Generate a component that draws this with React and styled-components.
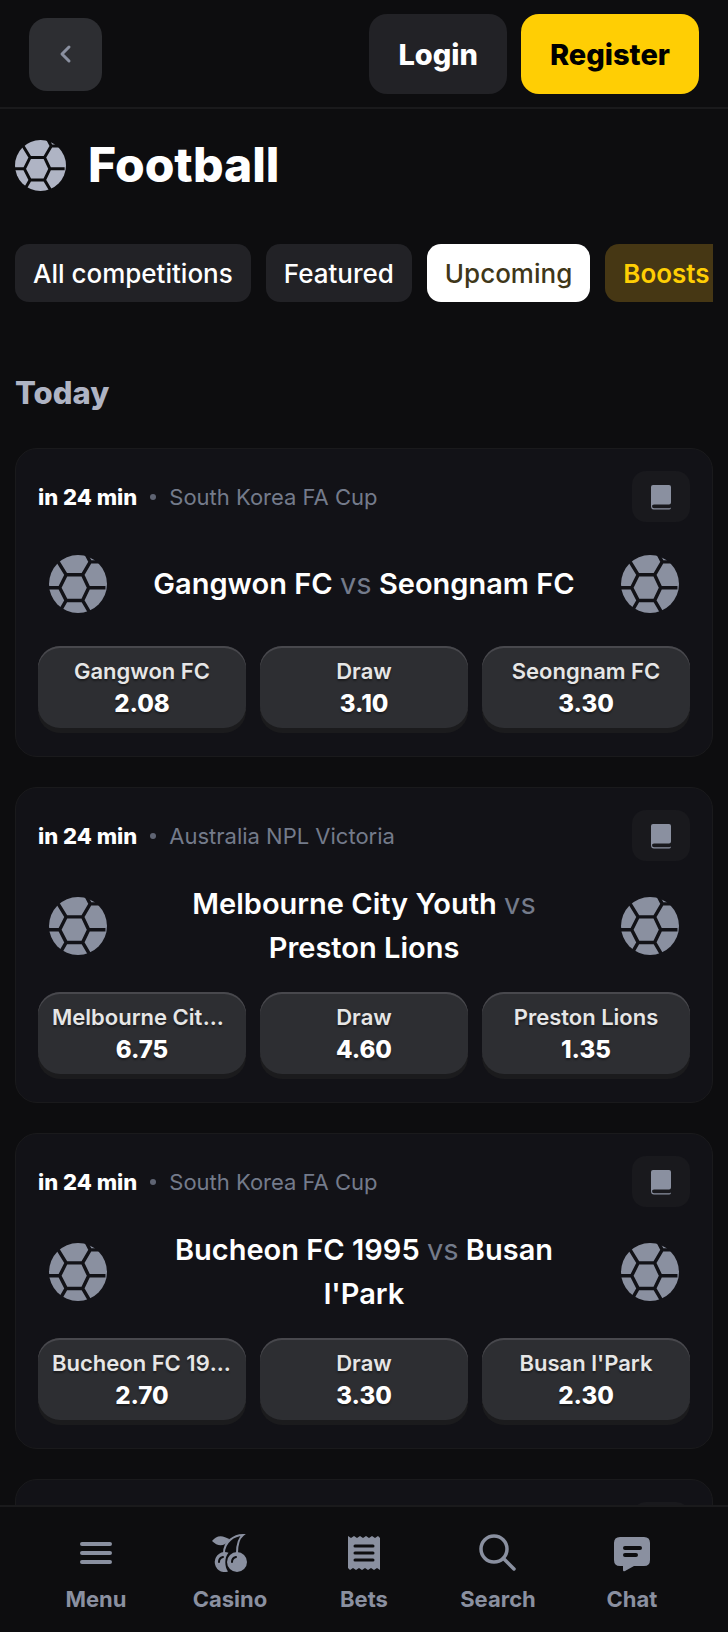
import React from 'react';
import styled, { createGlobalStyle, css } from 'styled-components';

const color = {
  page: '#0d0d0f',
  card: '#121217',
  line: '#1a1a1c',
  chip: '#222226',
  raised: '#2d2e32',
  raisedEdge: '#1b1b1d',
  icon: '#8a90a0',
  muted: '#747b8b',
  heading: '#afb4c4',
  accent: '#ffce04',
  white: '#fff',
};

const GlobalStyle = createGlobalStyle`
  * {
    box-sizing: border-box;
  }
  body {
    margin: 0;
    background: ${color.page};
    color: ${color.white};
    font-family: Inter, "Liberation Sans", sans-serif;
  }
  button {
    border: 0;
    padding: 0;
    font: inherit;
    color: inherit;
    cursor: pointer;
  }
`;

const center = css`
  display: flex;
  align-items: center;
  justify-content: center;
`;

const Shell = styled.div`
  display: flex;
  flex-direction: column;
  height: 100vh;
`;

const Header = styled.header`
  display: flex;
  align-items: center;
  flex: none;
  gap: 14px;
  padding: 14px 29px 13px;
  border-bottom: 2px solid ${color.line};
`;

const BackButton = styled.button`
  ${center}
  width: 73px;
  height: 73px;
  margin-right: auto;
  border-radius: 18px;
  background: ${color.raised};
  color: ${color.icon};
`;

const AuthButton = styled.button`
  height: 80px;
  padding: 0 29px;
  border-radius: 18px;
  font-size: 29px;
  font-weight: 800;
  color: ${props => (props.$primary ? '#000' : color.white)};
  background: ${props => (props.$primary ? color.accent : color.chip)};
`;

const Main = styled.main`
  flex: 1;
  min-height: 0;
  overflow-y: auto;
  padding: 0 15px;
  scrollbar-width: none;
`;

const TitleRow = styled.div`
  display: flex;
  align-items: center;
  gap: 22px;
  padding: 26px 0 49px;
`;

const Title = styled.h1`
  margin: 0;
  font-size: 48px;
  line-height: 60px;
  font-weight: 800;
`;

const Chips = styled.nav`
  display: flex;
  gap: 15px;
  overflow-x: auto;
  scrollbar-width: none;
`;

const chipTones = {
  plain: css`
    background: ${color.chip};
    color: ${color.white};
  `,
  active: css`
    background: ${color.white};
    color: #3f3719;
  `,
  boost: css`
    background: #463714;
    color: ${color.accent};
    font-weight: 600;
  `,
};

const Chip = styled.button`
  flex: none;
  height: 58px;
  padding: 0 18px;
  border-radius: 14px;
  font-size: 26px;
  font-weight: 500;
  ${props => chipTones[props.$tone]}
`;

const DayHeading = styled.h2`
  margin: 71px 0 35px;
  font-size: 31px;
  line-height: 40px;
  font-weight: 800;
  color: ${color.heading};
`;

const MatchList = styled.div`
  display: flex;
  flex-direction: column;
  gap: 30px;
`;

const Card = styled.article`
  padding: 22px;
  border: 1px solid ${color.line};
  border-radius: 22px;
  background: ${color.card};
`;

const CardHeader = styled.div`
  display: flex;
  align-items: center;
  font-size: 22px;
`;

const StartTime = styled.span`
  font-weight: 800;
`;

const Dot = styled.span`
  width: 6px;
  height: 6px;
  margin: 0 13px;
  border-radius: 50%;
  background: #5f6473;
`;

const League = styled.span`
  flex: 1;
  color: ${color.muted};
`;

const StatsButton = styled.button`
  ${center}
  width: 58px;
  height: 51px;
  border-radius: 14px;
  background: #19191d;
  color: ${color.icon};
`;

const Teams = styled.div`
  display: flex;
  align-items: center;
  gap: 34px;
  min-height: 124px;
  padding: 21px 11px 22px;
  color: ${color.icon};
`;

const TeamNames = styled.h3`
  flex: 1;
  margin: 0;
  font-size: 29px;
  line-height: 44px;
  font-weight: 600;
  text-align: center;
  color: ${color.white};
`;

const Versus = styled.span`
  font-weight: 400;
  color: ${color.muted};
`;

const Odds = styled.div`
  display: grid;
  grid-template-columns: repeat(3, minmax(0, 1fr));
  gap: 14px;
  padding-bottom: 6px;
`;

const OddButton = styled.button`
  height: 82px;
  padding: 2px 14px 0;
  border-radius: 22px;
  background: ${color.raised};
  box-shadow: 0 5px 0 ${color.raisedEdge}, inset 0 2px 0 #48484d;
  text-align: center;
  text-shadow: 0 2px 2px rgba(0, 0, 0, 0.4);
`;

const OddName = styled.span`
  display: block;
  overflow: hidden;
  font-size: 22px;
  line-height: 32px;
  font-weight: 600;
  white-space: nowrap;
  text-overflow: ellipsis;
  color: #e6e6e6;
`;

const OddValue = styled.span`
  display: block;
  font-size: 24px;
  line-height: 34px;
  font-weight: 800;
`;

const TabBar = styled.nav`
  display: grid;
  flex: none;
  grid-template-columns: repeat(5, 1fr);
  padding: 26px 29px 17px;
  border-top: 2px solid ${color.line};
  background: ${color.page};
`;

const Tab = styled.a`
  display: flex;
  flex-direction: column;
  align-items: center;
  gap: 10px;
  font-size: 22px;
  line-height: 32px;
  font-weight: 700;
  text-decoration: none;
  color: ${color.icon};
`;

const Football = ({ size, fill = 'currentColor' }) => {
  const id = React.useId();
  return (
    <svg width={size} height={size} viewBox="14 15 152 152" aria-hidden="true">
      <mask id={id}>
        <circle cx="90" cy="91" r="76" fill="#fff" />
        <path
          d="M42 101L59 67H102L118 101L102 134H59ZM8 101H42M59 67L38 33M102 67L122 33M122 33H156M122 33L110 10M118 101H162M102 134L122 168M59 134L44 160"
          fill="none"
          stroke="#000"
          strokeWidth="9"
        />
      </mask>
      <rect x="14" y="15" width="152" height="152" fill={fill} mask={`url(#${id})`} />
    </svg>
  );
};

const BackIcon = () => (
  <svg width="18" height="22" viewBox="0 0 18 22" fill="none" stroke="currentColor" strokeWidth="3" strokeLinecap="round" strokeLinejoin="round" aria-hidden="true">
    <path d="M12 4L5 11L12 18" />
  </svg>
);

const BookIcon = () => (
  <svg width="20" height="26" viewBox="0 0 20 26" fill="currentColor" aria-hidden="true">
    <path d="M2 1H18Q20 1 20 3V18.500Q20 20.500 18 20.500H3Q1 20.500 1 22Q1 24.200 3 24.200H18.500Q20 24.200 20 23V24Q19.500 25.500 18 25.500H3Q0 25.500 0 22V3Q0 1 2 1Z" />
  </svg>
);

const MenuIcon = () => (
  <svg width="40" height="40" viewBox="0 0 40 40" stroke="currentColor" strokeWidth="4" strokeLinecap="round" aria-hidden="true">
    <path d="M6 11H34M6 20H34M6 29H34" />
  </svg>
);

const CasinoIcon = () => (
  <svg width="40" height="40" viewBox="0 0 40 40" fill="none" aria-hidden="true">
    <path d="M2 8Q9 -1 20 7Q11 17 2 8Z" fill="currentColor" />
    <path d="M14 20C14 9 24 2 33 2C28 6 27 12 27 20" stroke="currentColor" strokeWidth="2" />
    <path d="M18 38.500A10 10 0 1 1 18.500 19.800C14.500 24 14.200 33 18 38.500Z" fill="currentColor" />
    <circle cx="27" cy="29" r="10" fill="currentColor" />
    <path d="M22 29Q22 25 26 24M9 29Q9 25 13 24" stroke={color.page} strokeWidth="2" strokeLinecap="round" />
  </svg>
);

const BetsIcon = () => (
  <svg width="40" height="40" viewBox="0 0 40 40" aria-hidden="true">
    <path d="M4 3L7 5L10 3L13 5L16 3L19 5L22 3L25 5L28 3L31 5L34 3L36 5V37L33 35L30 37L27 35L24 37L21 35L18 37L15 35L12 37L9 35L6 37L4 35Z" fill="currentColor" />
    <path d="M11 13H29M11 20H29M11 27H29" stroke={color.page} strokeWidth="3" strokeLinecap="round" />
  </svg>
);

const SearchIcon = () => (
  <svg width="40" height="40" viewBox="0 0 40 40" fill="none" stroke="currentColor" strokeWidth="3.5" strokeLinecap="round" aria-hidden="true">
    <circle cx="16" cy="16" r="13" />
    <path d="M26 26L36 36" />
  </svg>
);

const ChatIcon = () => (
  <svg width="40" height="40" viewBox="0 0 40 40" aria-hidden="true">
    <path d="M8 4H32Q38 4 38 10V27Q38 33 32 33H22L13 38Q11 39 11 37V33H8Q2 33 2 27V10Q2 4 8 4Z" fill="currentColor" />
    <path d="M13 15H28M13 22H24" stroke={color.page} strokeWidth="4" strokeLinecap="round" />
  </svg>
);

const filters = [
  { label: 'All competitions', tone: 'plain' },
  { label: 'Featured', tone: 'plain' },
  { label: 'Upcoming', tone: 'active' },
  { label: 'Boosts', tone: 'boost' },
];

const matches = [
  { id: 1, league: 'South Korea FA Cup', home: 'Gangwon FC', away: 'Seongnam FC', odds: ['2.08', '3.10', '3.30'] },
  { id: 2, league: 'Australia NPL Victoria', home: 'Melbourne City Youth', away: 'Preston Lions', odds: ['6.75', '4.60', '1.35'] },
  { id: 3, league: 'South Korea FA Cup', home: 'Bucheon FC 1995', away: "Busan l'Park", odds: ['2.70', '3.30', '2.30'] },
];

const tabs = [
  { label: 'Menu', Icon: MenuIcon },
  { label: 'Casino', Icon: CasinoIcon },
  { label: 'Bets', Icon: BetsIcon },
  { label: 'Search', Icon: SearchIcon },
  { label: 'Chat', Icon: ChatIcon },
];

const Match = ({ match }) => {
  const names = [match.home, 'Draw', match.away];
  return (
    <Card>
      <CardHeader>
        <StartTime>in 24 min</StartTime>
        <Dot />
        <League>{match.league}</League>
        <StatsButton type="button" aria-label="Match rules"><BookIcon /></StatsButton>
      </CardHeader>
      <Teams>
        <Football size={58} />
        <TeamNames>
          {match.home} <Versus>vs</Versus> {match.away}
        </TeamNames>
        <Football size={58} />
      </Teams>
      <Odds>
        {names.map((name, i) => (
          <OddButton key={name} type="button">
            <OddName>{name}</OddName>
            <OddValue>{match.odds[i]}</OddValue>
          </OddButton>
        ))}
      </Odds>
    </Card>
  );
};

const App = () => (
  <>
    <GlobalStyle />
    <Shell>
      <Header>
        <BackButton type="button" aria-label="Back"><BackIcon /></BackButton>
        <AuthButton type="button">Login</AuthButton>
        <AuthButton type="button" $primary>Register</AuthButton>
      </Header>
      <Main>
        <TitleRow>
          <Football size={51} fill={color.heading} />
          <Title>Football</Title>
        </TitleRow>
        <Chips>
          {filters.map(({ label, tone }) => (
            <Chip key={label} type="button" $tone={tone}>{label}</Chip>
          ))}
        </Chips>
        <DayHeading>Today</DayHeading>
        <MatchList>
          {matches.map(match => <Match key={match.id} match={match} />)}
          <Card>
            <CardHeader>
              <League />
              <StatsButton type="button" aria-label="Match rules" />
            </CardHeader>
          </Card>
        </MatchList>
      </Main>
      <TabBar>
        {tabs.map(({ label, Icon }) => (
          <Tab key={label} href="#">
            <Icon />
            {label}
          </Tab>
        ))}
      </TabBar>
    </Shell>
  </>
);

export default App;
